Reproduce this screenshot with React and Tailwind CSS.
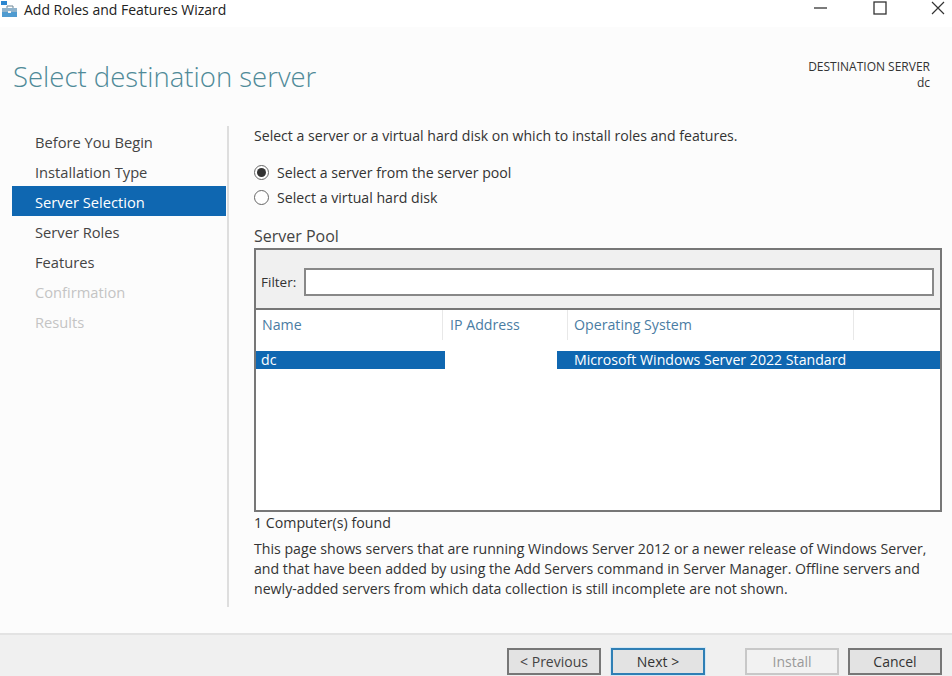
const font = "font-['Open_Sans','Noto_Sans',sans-serif]";

const steps = [
  { label: "Before You Begin" },
  { label: "Installation Type" },
  { label: "Server Selection", active: true },
  { label: "Server Roles" },
  { label: "Features" },
  { label: "Confirmation", off: true },
  { label: "Results", off: true },
];

function WizardIcon() {
  return (
    <svg width="18" height="18" viewBox="0 0 18 18" className="mt-[-8px]">
      <rect x="0" y="0" width="6" height="4" fill="#2b86d0" />
      <path d="M6 7V5h6v2" fill="none" stroke="#6f8796" />
      <rect x="1" y="7" width="15" height="4" fill="#8fb3cc" />
      <rect x="1" y="11" width="15" height="5" fill="#4f9bd0" />
      <rect x="7" y="10" width="3" height="2" fill="#f4f4f4" />
    </svg>
  );
}

function Radio({ checked, children }) {
  return (
    <div className="flex h-[25px] items-center">
      <span className="flex h-[15px] w-[15px] items-center justify-center rounded-full border border-[#666] bg-white">
        {checked && <span className="h-[9px] w-[9px] rounded-full bg-[#333]" />}
      </span>
      <span className="ml-[8px] text-[14.15px] text-[#333]">{children}</span>
    </div>
  );
}

function Btn({ children, kind }) {
  const styles = {
    next: "border-[#2f7fb5] text-[#333] ml-[10px] shadow-[0_0_0_1px_#d5e8f5]",
    off: "border-[#c8c8c8] text-[#999] ml-[40px] bg-[#f2f2f2]",
    cancel: "border-[#777] text-[#333] ml-[9px]",
    prev: "border-[#777] text-[#444]",
  };
  return (
    <button className={`flex h-[27px] w-[94px] items-center justify-center border-2 bg-[#e3e3e3] text-[14px] ${styles[kind]}`}>
      {children}
    </button>
  );
}

export default function App() {
  return (
    <div className={`flex h-[676px] w-[952px] flex-col overflow-hidden bg-[#fcfcfc] ${font}`}>
      {/* title bar */}
      <div className="flex h-[27px] shrink-0 items-center bg-white">
        <div className="ml-[1px]">
          <WizardIcon />
        </div>
        <span className="ml-[5px] mt-[-9px] text-[14px] text-[#222]">Add Roles and Features Wizard</span>
        <div className="ml-auto mr-[6px] mt-[-12px] flex items-center">
          <svg width="16" height="16" viewBox="0 0 16 16" className="mr-[44px]">
            <path d="M1 8h13" stroke="#333" strokeWidth="1.3" />
          </svg>
          <svg width="14" height="14" viewBox="0 0 14 14" className="mr-[43px]">
            <rect x="1" y="1" width="12" height="12" fill="none" stroke="#333" strokeWidth="1.3" />
          </svg>
          <svg width="16" height="16" viewBox="0 0 16 16">
            <path d="M2 2l12 12M14 2L2 14" stroke="#333" strokeWidth="1.2" />
          </svg>
        </div>
      </div>

      {/* header */}
      <div className="flex h-[99px] shrink-0 justify-between">
        <h1 className="ml-[13px] mt-[29px] text-[27.5px] leading-[42px] font-light text-[#4f8a98]">
          Select destination server
        </h1>
        <div className="mr-[22px] mt-[32px] text-right text-[12px] leading-[16px] text-[#333]">
          <div>DESTINATION SERVER</div>
          <div>dc</div>
        </div>
      </div>

      {/* body */}
      <div className="flex flex-1">
        <div className="h-[481px] w-[229px] shrink-0 border-r-2 border-[#dedede]">
          {steps.map((s) => (
            <div
              key={s.label}
              className={`ml-[12px] mr-[1px] flex h-[30px] items-center pl-[23px] pt-[2px] text-[14.7px] ${
                s.active ? "bg-[#0f67b1] text-white" : s.off ? "text-[#c4c4c4]" : "text-[#444]"
              }`}
            >
              {s.label}
            </div>
          ))}
        </div>

        <div className="ml-[25px] w-[688px]">
          <p className="text-[14.1px] leading-[20px] text-[#333]">
            Select a server or a virtual hard disk on which to install roles and features.
          </p>
          <div className="mt-[14px]">
            <Radio checked>Select a server from the server pool</Radio>
            <Radio>Select a virtual hard disk</Radio>
          </div>
          <h2 className="mt-[15px] text-[16px] leading-[22px] text-[#444]">Server Pool</h2>

          <div className="mt-[1px] h-[264px] border-2 border-[#777] bg-white">
            <div className="flex h-[60px] items-center border-b-2 border-[#777] bg-[#f0f0f0] pl-[5px] pr-[6px] pt-[6px]">
              <span className="text-[13.5px] text-[#333]">Filter:</span>
              <div className="ml-[8px] h-[28px] flex-1 border-2 border-[#888] bg-white" />
            </div>
            <div className="flex h-[30px] text-[14.2px] text-[#4a7ca3]">
              <div className="w-[187px] border-r border-[#e8e8e8] pl-[6px] pt-[4px]">Name</div>
              <div className="w-[125px] border-r border-[#e8e8e8] pl-[7px] pt-[4px]">IP Address</div>
              <div className="w-[286px] border-r border-[#e8e8e8] pl-[6px] pt-[4px]">Operating System</div>
            </div>
            <div className="mt-[11px] flex h-[18px] items-center text-[14.15px] text-white">
              <div className="w-[189px] bg-[#0f67b1] pl-[5px] leading-[18px]">dc</div>
              <div className="ml-[112px] flex-1 self-stretch bg-[#0f67b1] pl-[17px] leading-[18px]">
                Microsoft Windows Server 2022 Standard
              </div>
            </div>
          </div>

          <div className="mt-[1px] text-[14.2px] leading-[20px] text-[#333]">1 Computer(s) found</div>
          <p className="mt-[6px] w-[684px] text-[14.15px] leading-[20px] text-[#333]">
            This page shows servers that are running Windows Server 2012 or a newer release of Windows Server, and that have been added by using the Add Servers command in Server Manager. Offline servers and newly-added servers from which data collection is still incomplete are not shown.
          </p>
        </div>
      </div>

      {/* footer */}
      <div className="flex h-[43px] shrink-0 items-start border-t-2 border-[#e3e3e3] bg-[#f0f0f0] pl-[507px] pt-[13px]">
        <Btn kind="prev">&lt; Previous</Btn>
        <Btn kind="next">Next &gt;</Btn>
        <Btn kind="off">Install</Btn>
        <Btn kind="cancel">Cancel</Btn>
      </div>
    </div>
  );
}
